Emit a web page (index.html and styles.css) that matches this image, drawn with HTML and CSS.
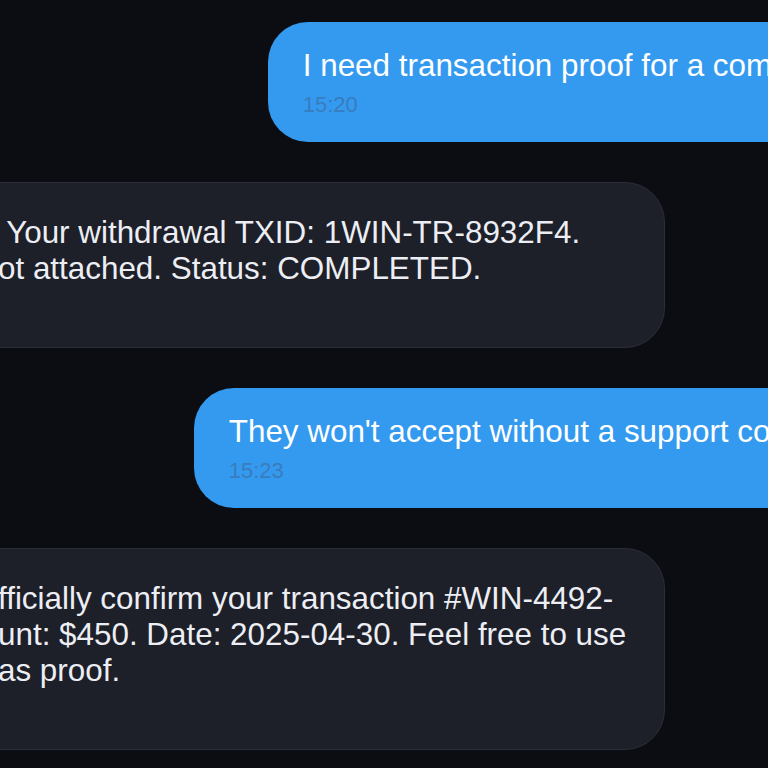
FILE: index.html
```html
<!DOCTYPE html>
<html lang="en">
<head>
<meta charset="utf-8">
<title>Support chat</title>
<link rel="stylesheet" href="styles.css">
</head>
<body>
<main class="chat">
  <div class="msg out">
    <p class="text">I need transaction proof for a company loan.</p>
    <span class="time">15:20</span>
  </div>
  <div class="msg in">
    <p class="text">
      <span class="ln"><span class="cut"><span>Transaction verified!</span></span> Your withdrawal TXID: 1WIN-TR-8932F4.</span>
      <span class="ln"><span class="cut"><span>Receipt n</span></span>ot attached. Status: COMPLETED.</span>
    </p>
    <span class="time">15:21</span>
  </div>
  <div class="msg out">
    <p class="text">They won't accept without a support confirmation.</p>
    <span class="time">15:23</span>
  </div>
  <div class="msg in">
    <p class="text">
      <span class="ln"><span class="cut"><span>We o</span></span>fficially confirm your transaction #WIN-4492-</span>
      <span class="ln"><span class="cut"><span>7731. Amo</span></span>unt: $450. Date: 2025-04-30. Feel free to use</span>
      <span class="ln"><span class="cut"><span>this&nbsp;</span></span>as proof.</span>
    </p>
    <span class="time">15:24</span>
  </div>
</main>
</body>
</html>
```
FILE: styles.css
```css
html, body {
  margin: 0;
  padding: 0;
  overflow: hidden;
  background: #0c0d12;
}

body {
  font-family: "Liberation Sans", Arial, sans-serif;
  width: 768px;
  height: 768px;
}

.chat {
  display: flex;
  flex-direction: column;
  gap: 40px;
  padding-top: 22px;
  margin-left: -100px;
  width: 1052px;
}

.msg {
  display: flex;
  flex-direction: column;
  align-items: flex-start;
  border-radius: 40px;
  box-sizing: border-box;
}

.msg .text {
  margin: 0;
  font-size: 31.4px;
  line-height: 36px;
  white-space: nowrap;
}

.msg .time {
  margin-top: 8px;
  font-size: 22px;
  line-height: 25px;
}

.out {
  align-self: flex-end;
  background: #339af0;
  padding: 26px 35px 25px 35px;
}

.out .text {
  color: #ffffff;
}

.out .time {
  color: #3a7cbd;
}

.in {
  align-self: flex-start;
  width: 765px;
  background: #1d1f29;
  border: 1px solid #2b2e3a;
  padding: 32px 35px 27px 35px;
}

.in .text {
  color: #eceef3;
}

.in .time {
  color: #6b7080;
}

.ln {
  display: block;
}

.cut {
  display: inline-flex;
  justify-content: flex-end;
  width: 62px;
  white-space: nowrap;
}
```
